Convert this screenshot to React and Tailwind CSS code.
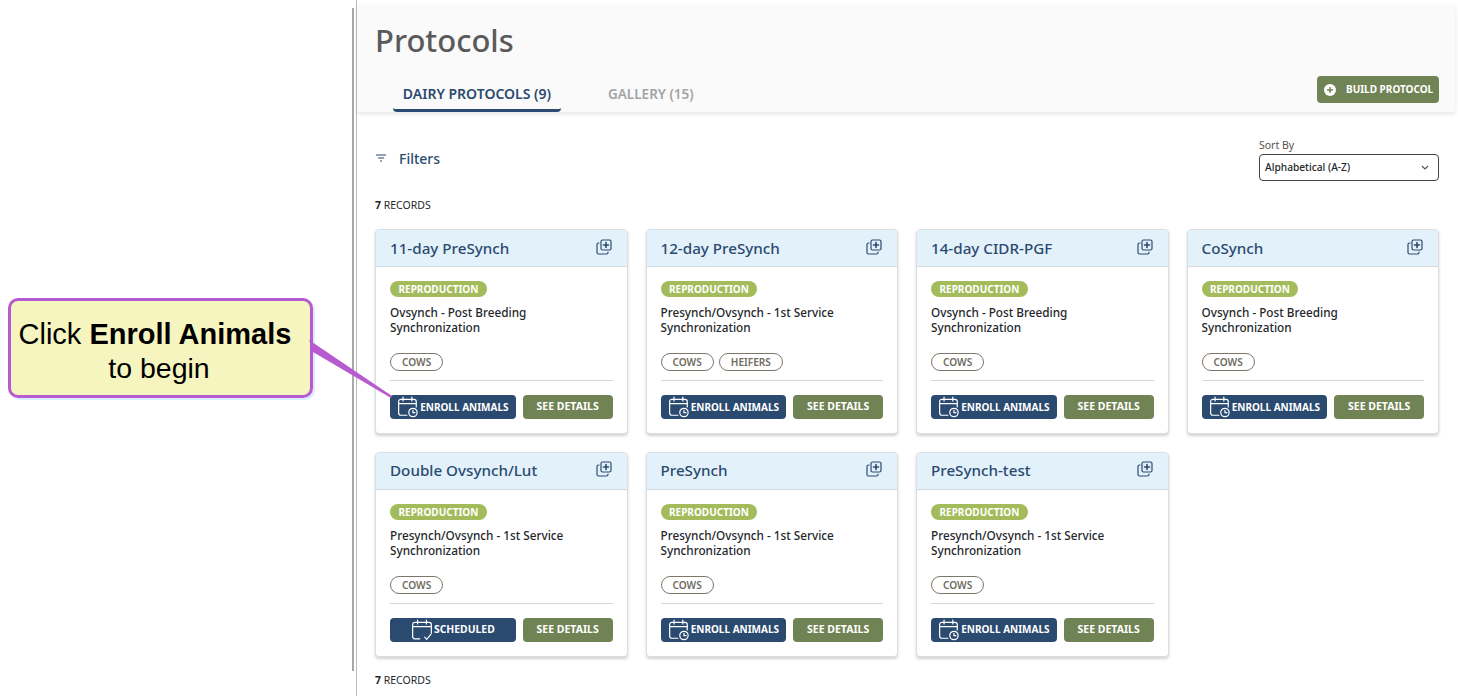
import React from 'react';

const protocols = [
  { name: '11-day PreSynch', desc: ['Ovsynch - Post Breeding', 'Synchronization'], tags: ['COWS'] },
  { name: '12-day PreSynch', desc: ['Presynch/Ovsynch - 1st Service', 'Synchronization'], tags: ['COWS', 'HEIFERS'] },
  { name: '14-day CIDR-PGF', desc: ['Ovsynch - Post Breeding', 'Synchronization'], tags: ['COWS'] },
  { name: 'CoSynch', desc: ['Ovsynch - Post Breeding', 'Synchronization'], tags: ['COWS'] },
  { name: 'Double Ovsynch/Lut', desc: ['Presynch/Ovsynch - 1st Service', 'Synchronization'], tags: ['COWS'], scheduled: true },
  { name: 'PreSynch', desc: ['Presynch/Ovsynch - 1st Service', 'Synchronization'], tags: ['COWS'] },
  { name: 'PreSynch-test', desc: ['Presynch/Ovsynch - 1st Service', 'Synchronization'], tags: ['COWS'] },
];

const CalendarClock = () => (
  <svg width="22" height="22" viewBox="0 0 20 20" fill="none" stroke="white" strokeWidth="1.1" strokeLinecap="round" className="shrink-0">
    <path d="M9 17.5H3.5a2 2 0 0 1-2-2V5a2 2 0 0 1 2-2h12a2 2 0 0 1 2 2v5" />
    <path d="M1.5 7h16M5.5 1v3.5M13.5 1v3.5" />
    <circle cx="14.5" cy="15" r="3.8" />
    <path d="M14.5 13v2.2h1.8" />
  </svg>
);

const CalendarCheck = () => (
  <svg width="22" height="22" viewBox="0 0 20 20" fill="none" stroke="white" strokeWidth="1.1" strokeLinecap="round" className="shrink-0">
    <path d="M8 18H3.5a2 2 0 0 1-2-2V5a2 2 0 0 1 2-2h13a2 2 0 0 1 2 2v8" />
    <path d="M1.5 7h17M6 1v3.5M14 1v3.5" />
    <path d="M12.5 16.5l1.8 2 3.7-4.5" />
  </svg>
);

const CopyPlus = () => (
  <svg width="16" height="16" viewBox="0 0 16 16" fill="none" stroke="#2a4a70" strokeWidth="1.2" strokeLinejoin="round" strokeLinecap="round">
    <rect x="5" y="1" width="10" height="10" rx="1.5" />
    <path d="M3 4H2.5A1.5 1.5 0 0 0 1 5.5v8A1.5 1.5 0 0 0 2.5 15h8a1.5 1.5 0 0 0 1.5-1.5V13" />
    <path d="M10 3.5v5M7.5 6h5" strokeWidth="1.6" />
  </svg>
);

const Card = ({ item }) => (
  <div className="h-[205px] rounded border border-[#dcdfe2] bg-white shadow-[0_2px_3px_rgba(0,0,0,0.18)] overflow-hidden flex flex-col">
    <div className="h-[37px] shrink-0 bg-[#e3f1fa] border-b border-[#d3dbe0] pl-[14px] pr-[15px] flex items-center justify-between">
      <span className="text-[15.2px] font-medium text-[#2a4a70]">{item.name}</span>
      <span className="-mt-[3px]"><CopyPlus /></span>
    </div>
    <div className="flex-1 px-[14px] pt-[14px] flex flex-col">
      <span className="self-start h-[16px] px-[8.5px] rounded-full bg-[#a3bb5b] text-white text-[10px] font-bold leading-[16px]">REPRODUCTION</span>
      <p className="mt-[8px] text-[11.75px] leading-[15px] font-medium text-[#23272b]">
        {item.desc[0]}<br />{item.desc[1]}
      </p>
      <div className="mt-[18px] flex gap-[5px]">
        {item.tags.map((t) => (
          <span key={t} className="h-[18px] px-[11px] rounded-full border border-[#7c7768] text-[10.1px] font-semibold leading-[16px] text-[#6f6c62]">{t}</span>
        ))}
      </div>
      <div className="mt-[9px] border-t border-[#d9d9d9]" />
      <div className="mt-[14px] flex gap-[7px]">
        <button className="w-[126px] h-[24px] rounded bg-[#2a4a70] text-white text-[10px] font-bold flex items-center justify-center gap-[1px]">
          {item.scheduled ? <CalendarCheck /> : <CalendarClock />}
          {item.scheduled ? <span className="text-[10.4px]">SCHEDULED</span> : 'ENROLL ANIMALS'}
        </button>
        <button className="w-[90px] h-[24px] rounded bg-[#708354] text-white text-[10.5px] font-bold">SEE DETAILS</button>
      </div>
    </div>
  </div>
);

const App = () => {
  return (
    <div className="relative h-[696px] w-[1458px] bg-white overflow-hidden flex font-['Noto_Sans',sans-serif]">
      {/* annotation column */}
      <div className="w-[356px] shrink-0 flex">
        <div className="w-[354px] mt-[8px] h-[663px] border-r-2 border-[#a8a8a8] flex items-start">
          <div className="mt-[290px] ml-[8px] w-[305px] h-[100px] pt-[6px] pr-[3px] rounded-[10px] border-[3.5px] border-[#b65bcf] bg-[#f7f5bf] shadow-[2px_2px_0_#dcebff] flex flex-col items-center justify-center font-['Liberation_Sans',sans-serif] text-[28.5px] leading-[34px] text-black">
            <div className="text-[29px]">Click <b>Enroll Animals</b>&nbsp;</div>
            <div>to begin</div>
          </div>
        </div>
      </div>

      {/* main panel */}
      <div className="flex-1 mr-[3px] border-l border-[#bdbdbd]">
        <div className="mt-[4px] h-[108px] bg-[#fafafa] shadow-[0_2px_4px_rgba(0,0,0,0.1)] px-[18px] relative">
          <h1 className="pt-[15px] text-[31px] leading-[42px] font-medium text-[#5a5a5a]">Protocols</h1>
          <div className="mt-[22px] ml-[18px] flex">
            <div className="w-[168px] h-[29px] text-center text-[14px] font-semibold text-[#2a4a70] border-b-[3px] border-[#2a4a70] rounded-b-sm">DAIRY PROTOCOLS (9)</div>
            <div className="ml-[47px] pt-[1px] text-[13.5px] font-semibold text-[#a3a3a3]">GALLERY (15)</div>
          </div>
          <button className="absolute right-[16px] top-[72px] w-[122px] h-[27px] rounded bg-[#708354] text-white text-[10px] font-bold flex items-center pl-[7px] gap-[10px]">
            <svg width="12" height="12" viewBox="0 0 12 12">
              <circle cx="6" cy="6" r="6" fill="white" />
              <path d="M6 3v6M3 6h6" stroke="#708354" strokeWidth="1.5" />
            </svg>
            BUILD PROTOCOL
          </button>
        </div>

        <div className="pl-[18px] pr-[16px]">
          <div className="mt-[26px] h-[43px] flex justify-between">
            <div className="mt-[10px] flex items-center h-[20px] text-[14px] font-medium text-[#2a4a70]">
              <svg width="12" height="12" viewBox="0 0 12 12" stroke="#2a4a70" strokeWidth="1.2" className="mr-[12px]">
                <path d="M1 3h10M3 6h6M5 9h2" />
              </svg>
              Filters
            </div>
            <div className="w-[180px]">
              <div className="text-[10.5px] leading-[14px] text-[#5c5148]">Sort By</div>
              <div className="mt-[2px] h-[27px] rounded border border-[#444] flex items-center justify-between pl-[5px] pr-[9px] text-[10.2px] font-medium text-[#23272b]">
                Alphabetical (A-Z)
                <svg width="8" height="6" viewBox="0 0 8 6" fill="none" stroke="#555" strokeWidth="1.2"><path d="M1 1l3 3 3-3" /></svg>
              </div>
            </div>
          </div>

          <div className="mt-[17px] text-[10.5px] leading-[14px] text-[#23272b]"><b>7</b> RECORDS</div>

          <div className="mt-[17px] grid grid-cols-4 gap-x-[18px] gap-y-[17.5px]">
            {protocols.map((p) => <Card key={p.name} item={p} />)}
          </div>

          <div className="mt-[16.5px] text-[10.5px] leading-[14px] text-[#23272b]"><b>7</b> RECORDS</div>
        </div>
      </div>

      {/* callout leader */}
      <svg className="absolute left-0 top-0 pointer-events-none" width="400" height="420">
        <polygon points="309,340 313,352 391,398 392,396" fill="#b65bcf" />
      </svg>
    </div>
  );
};

export default App;
